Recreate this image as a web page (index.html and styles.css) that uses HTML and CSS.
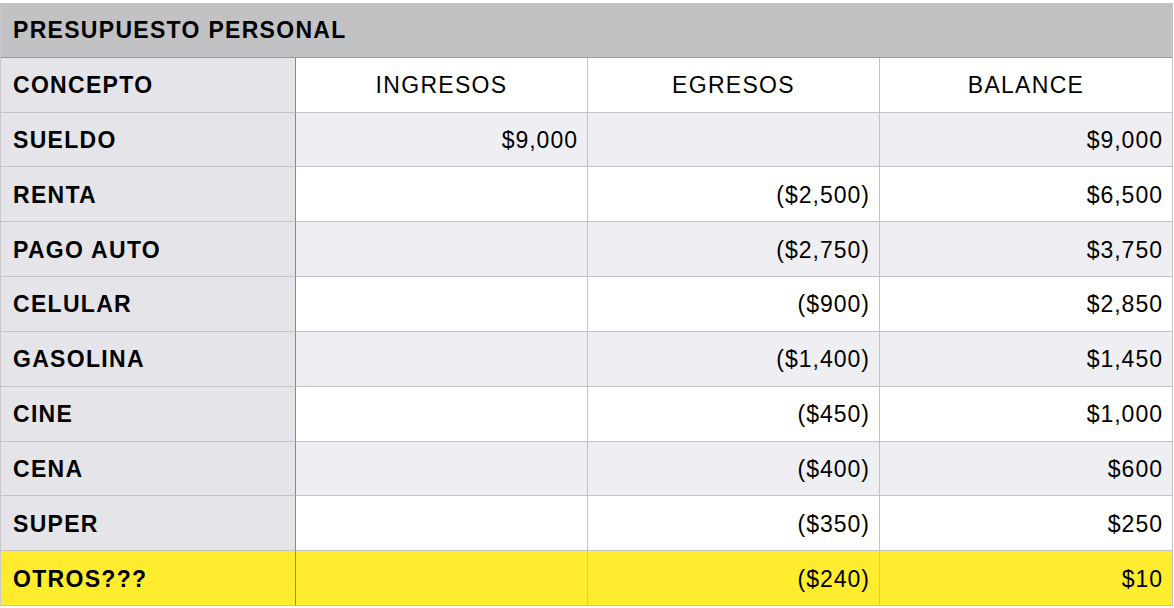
FILE: index.html
```html
<!DOCTYPE html>
<html lang="es">
<head>
<meta charset="utf-8">
<title>Presupuesto personal</title>
<link rel="stylesheet" href="styles.css">
</head>
<body>
<div class="sheet">
  <div class="cell title">PRESUPUESTO PERSONAL</div>

  <div class="cell label">CONCEPTO</div>
  <div class="cell head">INGRESOS</div>
  <div class="cell head">EGRESOS</div>
  <div class="cell head">BALANCE</div>

  <div class="cell label">SUELDO</div>
  <div class="cell num alt">$9,000</div>
  <div class="cell num alt"></div>
  <div class="cell num alt">$9,000</div>

  <div class="cell label">RENTA</div>
  <div class="cell num"></div>
  <div class="cell num">($2,500)</div>
  <div class="cell num">$6,500</div>

  <div class="cell label">PAGO AUTO</div>
  <div class="cell num alt"></div>
  <div class="cell num alt">($2,750)</div>
  <div class="cell num alt">$3,750</div>

  <div class="cell label">CELULAR</div>
  <div class="cell num"></div>
  <div class="cell num">($900)</div>
  <div class="cell num">$2,850</div>

  <div class="cell label">GASOLINA</div>
  <div class="cell num alt"></div>
  <div class="cell num alt">($1,400)</div>
  <div class="cell num alt">$1,450</div>

  <div class="cell label">CINE</div>
  <div class="cell num"></div>
  <div class="cell num">($450)</div>
  <div class="cell num">$1,000</div>

  <div class="cell label">CENA</div>
  <div class="cell num alt"></div>
  <div class="cell num alt">($400)</div>
  <div class="cell num alt">$600</div>

  <div class="cell label">SUPER</div>
  <div class="cell num"></div>
  <div class="cell num">($350)</div>
  <div class="cell num">$250</div>

  <div class="cell label hl">OTROS???</div>
  <div class="cell num hl"></div>
  <div class="cell num hl">($240)</div>
  <div class="cell num hl">$10</div>
</div>
</body>
</html>
```

FILE: styles.css
```css
html, body {
  margin: 0;
  padding: 0;
  background: #ffffff;
}

body {
  padding-top: 3px;
  font-family: "Liberation Sans", Arial, Helvetica, sans-serif;
  font-size: 23px;
  letter-spacing: 1.3px;
  color: #000000;
}

.sheet {
  display: grid;
  grid-template-columns: 295px 292px 292px 293px;
  grid-auto-rows: 54.82px;
  width: 1172px;
  box-sizing: border-box;
  border-left: 1px solid #c9c9cc;
}

.cell {
  display: flex;
  align-items: center;
  box-sizing: border-box;
  padding-top: 2px;
  border-right: 1px solid #c3c3c7;
  border-bottom: 1px solid #c3c3c7;
  background: #ffffff;
  white-space: nowrap;
}

.title {
  grid-column: 1 / -1;
  background: #c2c2c4;
  font-weight: bold;
  padding-left: 12px;
  border-bottom-color: #9b9b9f;
  border-right-color: #c2c2c4;
}

.label {
  background: #e5e4e8;
  font-weight: bold;
  padding-left: 12px;
  border-right-color: #86868a;
}

.head {
  justify-content: center;
}

.num {
  justify-content: flex-end;
  padding-right: 9px;
  letter-spacing: 1px;
}

.alt {
  background: #efeef2;
}

.hl {
  background: #ffec2e;
}
```
